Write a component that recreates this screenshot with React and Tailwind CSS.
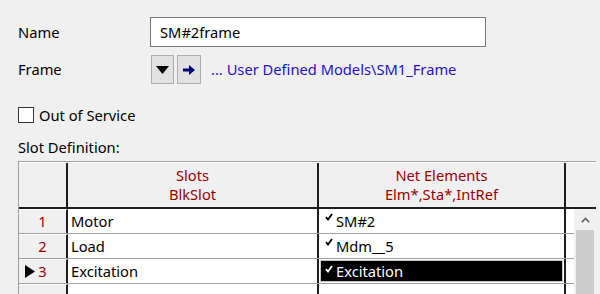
import React from 'react';

const Check = ({ color = '#000' }) => (
    <svg width="8" height="8" viewBox="0 0 8 8" className="shrink-0 self-start mt-[4px]">
        <path d="M1 4.2 L3 6.5 L7 1" stroke={color} strokeWidth="1.8" fill="none" />
    </svg>
);

const rows = [
    { n: 1, slot: 'Motor', net: 'SM#2' },
    { n: 2, slot: 'Load', net: 'Mdm__5' },
    { n: 3, slot: 'Excitation', net: 'Excitation', current: true },
];

const App = () => {
    return (
        <div className="w-[600px] h-[294px] bg-[#f0f0f0] overflow-hidden font-['Noto_Sans',sans-serif] text-[14.7px] text-black">
            <div className="pl-[18px] pt-[17px]">
                <div className="flex items-center h-[30px]">
                    <span className="w-[132px]">Name</span>
                    <div className="w-[336px] h-[30px] border border-[#7a7a7a] bg-white pl-[9px] flex items-center">SM#2frame</div>
                </div>

                <div className="flex items-center h-[29px] mt-[8px]">
                    <span className="w-[133px]">Frame</span>
                    <button className="w-[23px] h-[29px] border border-[#adadad] bg-[#e1e1e1] flex items-center justify-center">
                        <svg width="13" height="8" viewBox="0 0 13 8"><path d="M0 0 H13 L6.5 8 Z" fill="#000" /></svg>
                    </button>
                    <button className="w-[24px] h-[29px] ml-[3px] border border-[#adadad] bg-[#e1e1e1] flex items-center justify-center">
                        <svg width="12" height="10" viewBox="0 0 12 10"><path d="M0 3.5 H6 V0 L12 5 L6 10 V6.5 H0 Z" fill="#00007a" /></svg>
                    </button>
                    <span className="ml-[10px] text-[#1c12c8]">... User Defined Models\SM1_Frame</span>
                </div>

                <div className="flex items-center h-[16px] mt-[23px]">
                    <div className="w-[16px] h-[16px] border border-[#333] bg-white" />
                    <span className="ml-[5px]">Out of Service</span>
                </div>

                <div className="mt-[14px] leading-[20px]">Slot Definition:</div>

                <div className="mt-[4px] w-[578px] border-t border-l border-[#a0a0a0] bg-[#f0f0f0]">
                    <div className="flex h-[47px] border-t border-white border-b-2 border-b-[#1e1e1e] text-[#990000] leading-[19px]">
                        <div className="w-[49px] border-r-2 border-[#1e1e1e]" />
                        <div className="w-[251px] border-r-2 border-[#1e1e1e] flex flex-col items-center pt-[3px]">
                            <span>Slots</span>
                            <span>BlkSlot</span>
                        </div>
                        <div className="w-[247px] border-r-2 border-[#1e1e1e] flex flex-col items-center pt-[3px]">
                            <span>Net Elements</span>
                            <span>Elm*,Sta*,IntRef</span>
                        </div>
                        <div className="flex-1" />
                    </div>

                    <div className="flex">
                        <div className="flex-1">
                            {rows.map((r) => (
                                <div key={r.n} className="flex h-[25px] border-b border-[#a0a0a0]">
                                    <div className="w-[49px] border-r-2 border-[#1e1e1e] border-t border-t-white bg-[#f0f0f0] flex items-center justify-center relative text-[#990000]">
                                        {r.current && (
                                            <svg width="10" height="13" viewBox="0 0 10 13" className="absolute left-[6px] top-[5px]"><path d="M0 0 L10 6.5 L0 13 Z" fill="#000" /></svg>
                                        )}
                                        <span>{r.n}</span>
                                    </div>
                                    <div className="w-[251px] border-r-2 border-[#1e1e1e] bg-white flex items-center pl-[3px]">{r.slot}</div>
                                    {r.current ? (
                                        <div className="w-[247px] border-r-2 border-[#1e1e1e] bg-white p-[1px]">
                                            <div className="h-full bg-black border border-[#c8c8c8] flex items-center pl-[4px] text-white gap-[3px]">
                                                <Check color="#fff" />
                                                <span>{r.net}</span>
                                            </div>
                                        </div>
                                    ) : (
                                        <div className="w-[247px] border-r-2 border-[#1e1e1e] bg-white flex items-center pl-[6px] gap-[3px]">
                                            <Check />
                                            <span>{r.net}</span>
                                        </div>
                                    )}
                                    <div className="flex-1 bg-white" />
                                </div>
                            ))}
                            <div className="flex h-[25px]">
                                <div className="w-[49px] border-r-2 border-[#1e1e1e] border-t border-t-white bg-[#f0f0f0]" />
                                <div className="w-[251px] border-r-2 border-[#1e1e1e] bg-white" />
                                <div className="w-[247px] border-r-2 border-[#1e1e1e] bg-white" />
                                <div className="flex-1 bg-white" />
                            </div>
                        </div>
                        <div className="w-[22px] bg-[#f0f0f0] flex flex-col items-center">
                            <div className="h-[21px] w-full flex items-center justify-center">
                                <svg width="9" height="6" viewBox="0 0 9 6"><path d="M0.8 5.2 L4.5 1.5 L8.2 5.2" stroke="#606060" strokeWidth="1.6" fill="none" /></svg>
                            </div>
                            <div className="w-[18px] flex-1 bg-[#cdcdcd]" />
                        </div>
                    </div>
                </div>
            </div>
        </div>
    );
};

export default App;
